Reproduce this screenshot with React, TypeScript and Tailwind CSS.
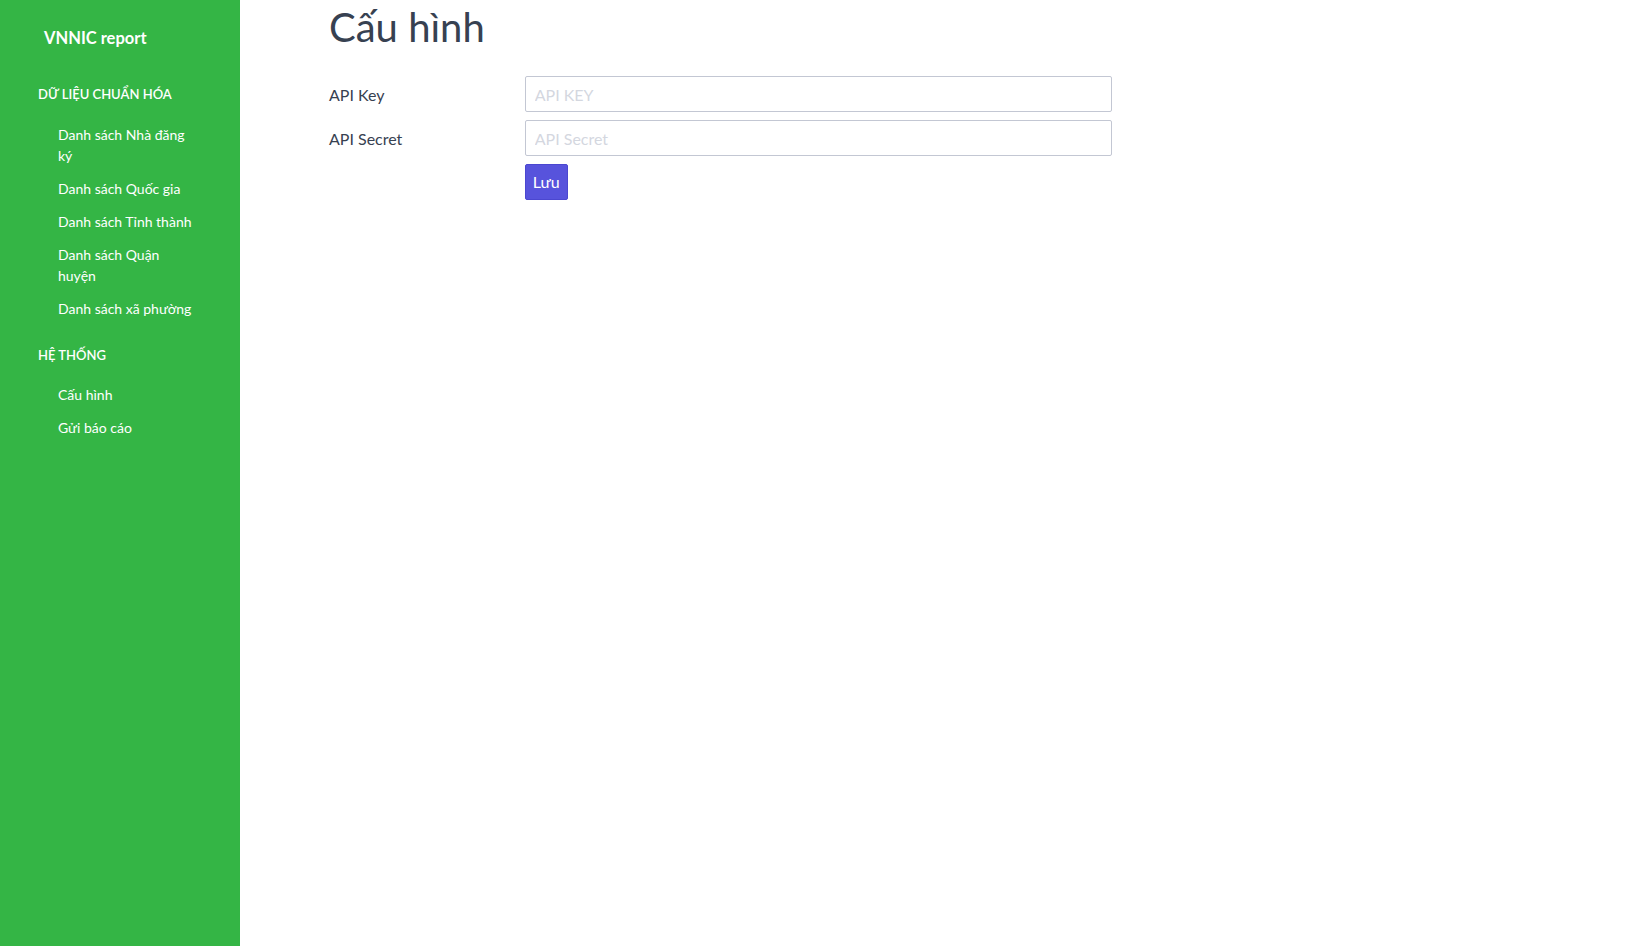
import React from "react";

const font = { fontFamily: 'Lato, "Open Sans", sans-serif' };

export default function App() {
  const sec1 = [
    "Danh sách Nhà đăng ký",
    "Danh sách Quốc gia",
    "Danh sách Tỉnh thành",
    "Danh sách Quận huyện",
    "Danh sách xã phường",
  ];
  const sec2 = ["Cấu hình", "Gửi báo cáo"];
  return (
    <div className="flex min-h-[946px] w-full bg-white" style={font}>
      <aside className="w-[240px] shrink-0 bg-[#34b545] text-white">
        <div className="pl-[44px] pt-[26px] text-[16.5px] font-bold leading-[24px]">VNNIC report</div>
        <div className="mt-[34px] pl-[38px] text-[13px] font-semibold leading-[20px]">DỮ LIỆU CHUẨN HÓA</div>
        <ul className="mt-[20px] pl-[58px] pr-[42px]">
          {sec1.map((t) => (
            <li key={t} className="pb-[12px] text-[14px] leading-[21px]">{t}</li>
          ))}
        </ul>
        <div className="mt-[14px] pl-[38px] text-[13px] font-semibold leading-[20px]">HỆ THỐNG</div>
        <ul className="mt-[19px] pl-[58px] pr-[42px]">
          {sec2.map((t) => (
            <li key={t} className="pb-[12px] text-[14px] leading-[21px]">{t}</li>
          ))}
        </ul>
      </aside>
      <main className="flex-1 pl-[89px]">
        <div className="w-[783px]">
          <h1 className="pt-[2px] text-[40px] leading-[50px] text-[#374151]">Cấu hình</h1>
          <div className="mt-[24px] grid grid-cols-4 gap-y-[8px]">
            <label className="flex items-center pt-[2px] text-[16px] text-[#374151]">API Key</label>
            <input
              className="col-span-3 h-[36px] rounded-[2px] border border-[#c3c7d3] px-[9px] text-[16px] text-[#374151] placeholder:text-[#d4d7df] outline-none"
              placeholder="API KEY"
            />
            <label className="flex items-center pt-[2px] text-[16px] text-[#374151]">API Secret</label>
            <input
              className="col-span-3 h-[36px] rounded-[2px] border border-[#c3c7d3] px-[9px] text-[16px] text-[#374151] placeholder:text-[#d4d7df] outline-none"
              placeholder="API Secret"
            />
            <div />
            <div className="col-span-3">
              <button className="h-[36px] rounded-[2px] border border-[#4b47d0] bg-[#5753dc] px-[7px] text-[16px] text-white">Lưu</button>
            </div>
          </div>
        </div>
      </main>
    </div>
  );
}
